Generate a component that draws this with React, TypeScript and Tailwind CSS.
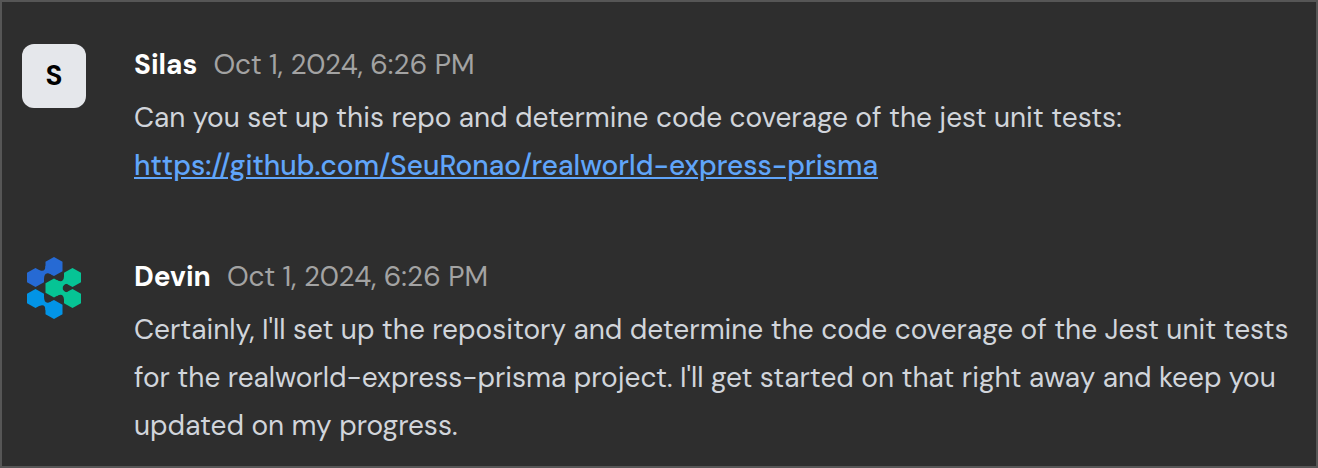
import React from "react";

interface MessageProps {
  author: string;
  time: string;
  avatar: React.ReactNode;
  children: React.ReactNode;
}

const Message: React.FC<MessageProps> = ({ author, time, avatar, children }) => {
  return (
    <article className="flex gap-12">
      <div className="size-16 shrink-0">{avatar}</div>
      <div className="min-w-0 flex-1">
        <header className="flex items-baseline gap-4 text-[28px] leading-[42px]">
          <span className="font-bold text-white">{author}</span>
          <time className="text-[#a3a3a3]">{time}</time>
        </header>
        <div className="mt-2 text-[28px] leading-12 text-[#d1d5db]">{children}</div>
      </div>
    </article>
  );
};

// Each group is a set of hexagons joined by curved necks
const DevinLogo: React.FC = () => (
  <svg viewBox="0 0 64 64" className="size-16" aria-hidden="true">
    <g fill="#266ad4">
      <path d="M32 1l8.5 4.7v9.6L32 20l-8.5-4.7V5.7z" />
      <path d="M13.5 12l8.5 4.7v9.6L13.5 31L5 26.3v-9.6z" />
      <path d="M17 14Q23.500 17 23.500 9.500L32 20L29.500 18.600Q22 14.500 22 23.500z" />
    </g>
    <g fill="#06c495">
      <path d="M50.5 12l8.5 4.700v9.600L50.500 31L42 26.300v-9.600z" />
      <path d="M32 22.500l8.500 4.700v9.600L32 41.500l-8.500-4.700v-9.600z" />
      <path d="M50.500 33l8.500 4.700v9.600L50.500 52L42 47.300v-9.600z" />
      <path d="M35 24.200Q41.500 27.500 42 20.500L49 30.200L46.800 28.600A4 4 0 1 0 46.800 35.400L49 33.800L42 43.500Q41.500 36.500 35 39.800z" />
    </g>
    <g fill="#0294e6">
      <path d="M13.500 33l8.500 4.700v9.600L13.500 52L5 47.300v-9.600z" />
      <path d="M32 44l8.500 4.700v9.600L32 63l-8.500-4.700v-9.600z" />
      <path d="M22 40.500Q22 49.500 29.500 45.400L32 44L23.500 54.500Q23.500 47 17 50z" />
    </g>
  </svg>
);

const App: React.FC = () => {
  return (
    <main className="flex min-h-screen flex-col gap-[66px] border-2 border-[#565656] bg-[#2e2e2e] px-5 pt-[42px] font-['DM_Sans','Open_Sans',sans-serif]">
      <Message
        author="Silas"
        time="Oct 1, 2024, 6:26 PM"
        avatar={
          <div className="flex size-16 items-center justify-center rounded-xl bg-[#e5e7eb] text-[28px] font-bold text-black">
            S
          </div>
        }
      >
        <p>Can you set up this repo and determine code coverage of the jest unit tests:</p>
        <a
          href="https://github.com/SeuRonao/realworld-express-prisma"
          className="font-medium text-[#60a5fa] underline"
        >
          https://github.com/SeuRonao/realworld-express-prisma
        </a>
      </Message>
      <Message author="Devin" time="Oct 1, 2024, 6:26 PM" avatar={<DevinLogo />}>
        <p>
          Certainly, I'll set up the repository and determine the code coverage of the Jest unit tests
          for the realworld-express-prisma project. I'll get started on that right away and keep you
          updated on my progress.
        </p>
      </Message>
    </main>
  );
};

export default App;
